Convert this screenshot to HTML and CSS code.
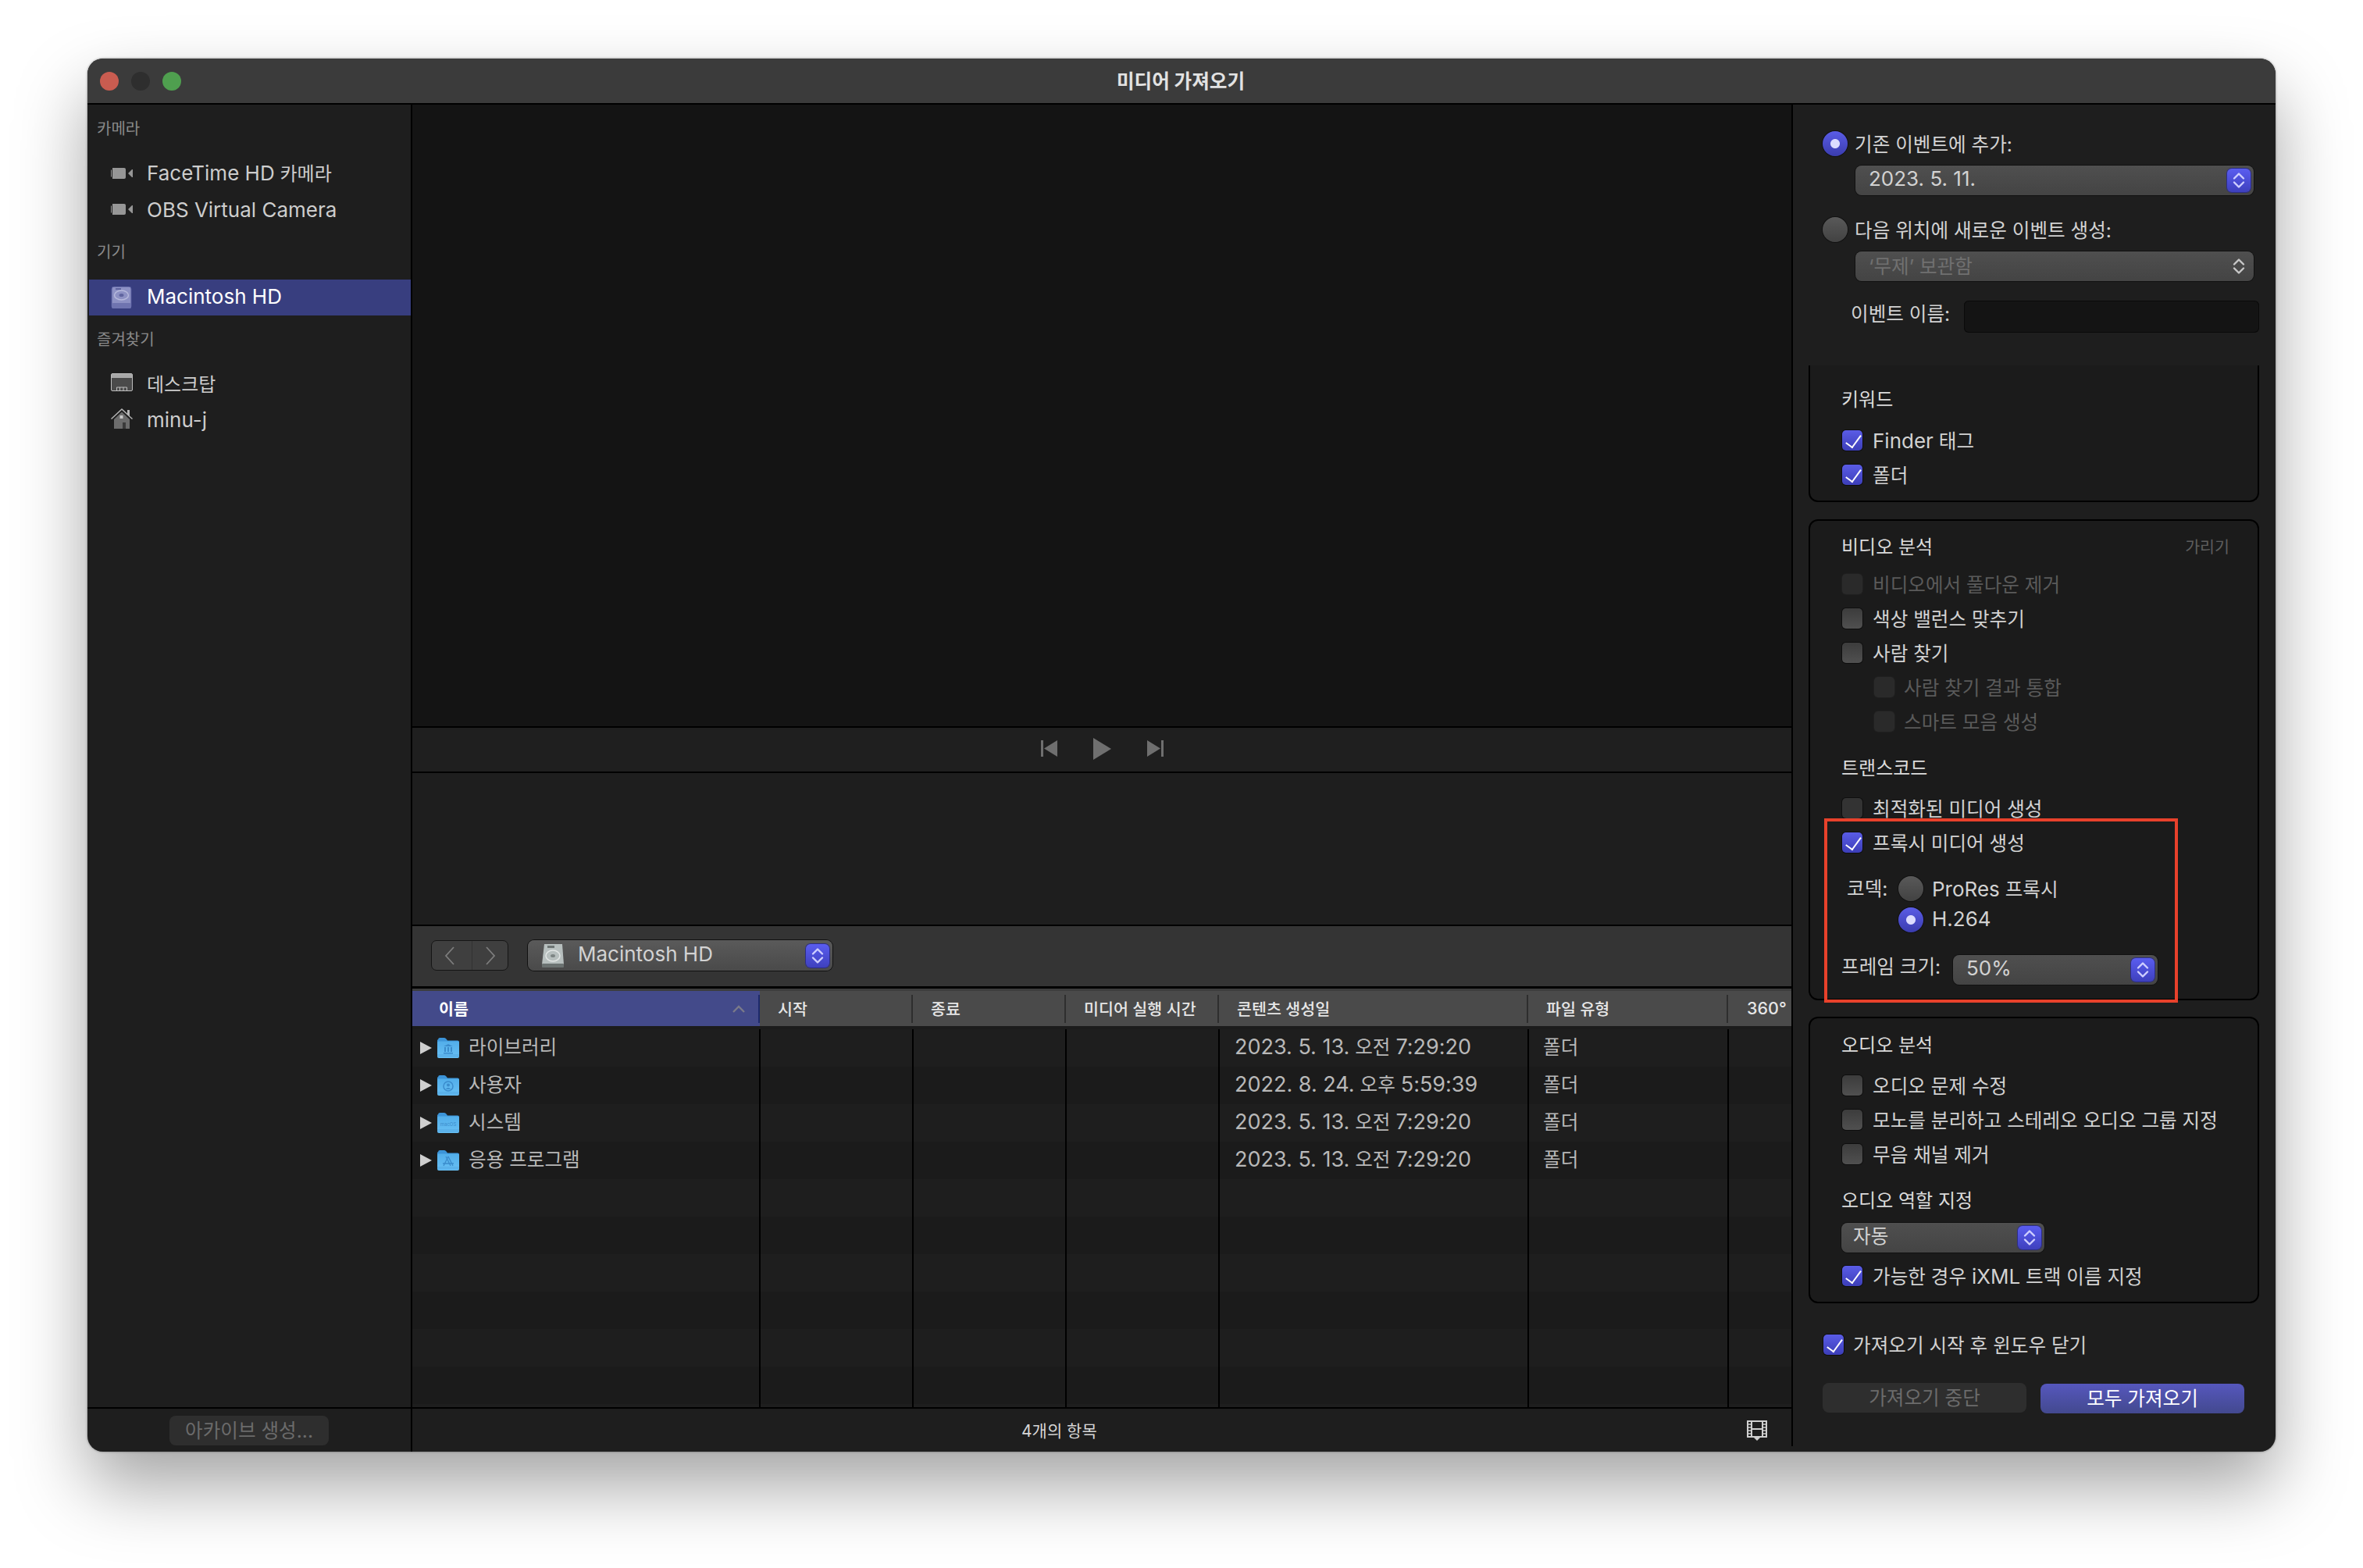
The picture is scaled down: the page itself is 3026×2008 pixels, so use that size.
FILE: index.html
```html
<!doctype html>
<html lang="ko">
<head>
	<title>미디어 가져오기</title>
	<meta charset="utf-8"/>
	<link rel="stylesheet" href="styles.css">
</head>
<body>
	<svg class="defs">
		<defs>
			<linearGradient id="folderBody" x1="0" y1="0" x2="0" y2="1">
				<stop offset="0" stop-color="#52aeea"/>
				<stop offset="1" stop-color="#68c0f4"/>
			</linearGradient>
			<symbol id="chevrons" viewBox="0 0 30 30">
				<path d="M9 12.5 15 6.5l6 6M9 17.5l6 6 6-6" fill="none" stroke-width="2.4" stroke-linecap="round" stroke-linejoin="round"/>
			</symbol>
			<symbol id="folder" viewBox="0 0 28 26">
				<path d="M1 2.5Q1 0 3 0h6q1.500 0 2.500 1.500L13 3.500h13q2 0 2 2V8H0V2.500Z" fill="#3c94d8"/>
				<path d="M0 6q0-1.500 1.500-1.500h25Q28 4.500 28 6v18q0 2-2 2H2q-2 0-2-2Z" fill="url(#folderBody)"/>
				<path d="M0 22h28M0 24h28" stroke="#4a9fdc" stroke-width=".7"/>
			</symbol>
			<symbol id="camera" viewBox="0 0 28 16">
				<path d="M2 1h15q2 0 2 2v10q0 2-2 2H2Z" fill="#969696"/>
				<path d="M0 3.500h1v9H0ZM22 8l5-5h1v10h-1Z" fill="#969696"/>
			</symbol>
		</defs>
	</svg>

	<div class="window">
		<header class="titlebar">
			<div class="lights">
				<span class="light light-red"></span>
				<span class="light light-off"></span>
				<span class="light light-green"></span>
			</div>
			<div class="title">미디어 가져오기</div>
		</header>

		<div class="content">
			<aside class="sidebar">
				<div class="side-list">
					<div class="side-label side-label-first">카메라</div>
					<div class="side-item"><svg class="side-icon"><use href="#camera" x="0" y="6" width="28" height="16"/></svg><span class="side-mixed"><span class="latin">FaceTime HD</span> 카메라</span></div>
					<div class="side-item"><svg class="side-icon"><use href="#camera" x="0" y="6" width="28" height="16"/></svg><span class="latin">OBS Virtual Camera</span></div>
					<div class="side-label side-label-devices">기기</div>
					<div class="side-item side-item-selected">
						<svg class="side-icon" viewBox="0 0 28 28">
							<rect x="1" y="0" width="25" height="28" rx="3" fill="#8d91c4" stroke="#555b9c"/>
							<rect x="6" y="2" width="7" height="2" fill="#5f649f"/>
							<ellipse cx="13.500" cy="11" rx="9" ry="6" fill="none" stroke="#b6b9dc" stroke-width="1.500"/>
							<ellipse cx="13.500" cy="11" rx="3" ry="2" fill="#5f649f"/>
							<rect x="1" y="21" width="25" height="7" rx="2" fill="#6f74b0"/>
						</svg><span class="latin side-mixed">Macintosh HD</span></div>
					<div class="side-label side-label-favorites">즐겨찾기</div>
					<div class="side-item">
						<svg class="side-icon" viewBox="0 0 28 28">
							<rect x="0.500" y="2.500" width="27" height="22" rx="1.500" fill="#4a4a4a" stroke="#bdbdbd"/>
							<rect x="1" y="3" width="26" height="5" fill="#a8a8a8"/>
							<path d="M7.500 24v-4h13v4M11.500 20v4M16 20v4" fill="none" stroke="#bdbdbd"/>
						</svg>데스크탑</div>
					<div class="side-item">
						<svg class="side-icon" viewBox="0 0 28 28">
							<path d="M0 14 14 1l7 6.500V3h3v7.500l4 3.500-1 1L14 3 1 15Z" fill="#b5b5b5"/>
							<path d="M4 15 14 5.500 24 15v12H4Z" fill="#6c6c6c"/>
							<rect x="11.500" y="10" width="4" height="4" fill="#c8c8c8"/>
							<rect x="15" y="19" width="4" height="8" fill="#3a3a3a"/>
						</svg><span class="latin side-user">minu-j</span></div>
				</div>
				<div class="side-foot"><button class="btn btn-off btn-archive">아카이브 생성...</button></div>
			</aside>

			<main class="main">
				<div class="viewer"></div>
				<div class="transport">
					<svg class="tp-icon" viewBox="0 0 21 21"><path d="M0 0h3v21H0ZM21 0v21L4 10.500Z" fill="#6f6f6f"/></svg>
					<svg class="tp-play" viewBox="0 0 23 28"><path d="M0 0v28l23-14Z" fill="#6f6f6f"/></svg>
					<svg class="tp-icon" viewBox="0 0 21 21"><path d="M0 0v21l17-10.500ZM18 0h3v21h-3Z" fill="#6f6f6f"/></svg>
				</div>
				<div class="blank"></div>
				<div class="toolbar">
					<div class="nav">
						<span class="nav-btn nav-back"><svg viewBox="0 0 14 24"><path d="M12 1 2 12l10 11" fill="none" stroke="#7d7d7d" stroke-width="1.800"/></svg></span>
						<span class="nav-btn"><svg viewBox="0 0 14 24"><path d="m2 1 10 11L2 23" fill="none" stroke="#7d7d7d" stroke-width="1.800"/></svg></span>
					</div>
					<div class="select select-path">
						<svg class="hd-icon" viewBox="0 0 30 30">
							<path d="M4 0h23l2 26q0 4-3 4H4q-3 0-3-4Z" fill="#b7bfbe"/>
							<rect x="8" y="2" width="9" height="3" fill="#6d7473"/>
							<ellipse cx="15" cy="15" rx="9" ry="7" fill="none" stroke="#e2e6e5" stroke-width="1.500"/>
							<ellipse cx="15" cy="15" rx="3" ry="2" fill="#7d8584"/>
							<rect x="1" y="25" width="28" height="5" rx="1" fill="#6b7271"/>
						</svg>
						<span class="select-text latin">Macintosh HD</span>
						<span class="stepper"><svg><use href="#chevrons"/></svg></span>
					</div>
				</div>
				<div class="table-head">
					<div class="th th-name">이름<svg class="sort" viewBox="0 0 16 10"><path d="M1 9 8 2l7 7" fill="none" stroke="#7a7a8a" stroke-width="2.400"/></svg></div>
					<div class="th">시작</div>
					<div class="th">종료</div>
					<div class="th">미디어 실행 시간</div>
					<div class="th">콘텐츠 생성일</div>
					<div class="th">파일 유형</div>
					<div class="th th-last">360°</div>
				</div>
				<div class="table-body">
					<div class="row">
						<div class="cell-name"><span class="arrow"></span><svg class="folder"><use href="#folder"/><path d="M8 11 14 8l6 3ZM9 12h2v6H9ZM13 12h2v6h-2ZM17 12h2v6h-2ZM8 19h12v1.500H8Z" fill="#3b8ccc"/></svg>라이브러리</div>
						<div class="cell-date"><span class="num">2023. 5. 13.</span> 오전 <span class="num">7:29:20</span></div>
						<div class="cell-type">폴더</div>
					</div>
					<div class="row">
						<div class="cell-name"><span class="arrow"></span><svg class="folder"><use href="#folder"/><circle cx="14" cy="14" r="6" fill="none" stroke="#3b8ccc" stroke-width="1.500"/><circle cx="14" cy="12.500" r="2" fill="#3b8ccc"/><path d="M10.500 18q3.500-4 7 0Z" fill="#3b8ccc"/></svg>사용자</div>
						<div class="cell-date"><span class="num">2022. 8. 24.</span> 오후 <span class="num">5:59:39</span></div>
						<div class="cell-type">폴더</div>
					</div>
					<div class="row">
						<div class="cell-name"><span class="arrow"></span><svg class="folder"><use href="#folder"/><text class="folder-text" x="14" y="17" text-anchor="middle">macOS</text></svg>시스템</div>
						<div class="cell-date"><span class="num">2023. 5. 13.</span> 오전 <span class="num">7:29:20</span></div>
						<div class="cell-type">폴더</div>
					</div>
					<div class="row">
						<div class="cell-name"><span class="arrow"></span><svg class="folder"><use href="#folder"/><path d="M14 8 8 20M14 8l6 12M7 17h14M11 8l6 12" fill="none" stroke="#3b8ccc" stroke-width="1.300"/></svg>응용 프로그램</div>
						<div class="cell-date"><span class="num">2023. 5. 13.</span> 오전 <span class="num">7:29:20</span></div>
						<div class="cell-type">폴더</div>
					</div>
					<div class="row"></div>
					<div class="row"></div>
					<div class="row"></div>
					<div class="row"></div>
					<div class="row"></div>
					<div class="row"></div>
					<div class="row"></div>
				</div>
				<div class="status">
					<span class="status-count">4개의 항목</span>
					<svg class="film" viewBox="0 0 26 26">
						<path d="M1 1h24v20H1Z" fill="none" stroke="#cfcfcf" stroke-width="2"/>
						<path d="M6 1v20M20 1v20M6 11h14" fill="none" stroke="#cfcfcf" stroke-width="2"/>
						<path d="M2 5h3M2 9h3M2 13h3M2 17h3M21 5h3M21 9h3M21 13h3M21 17h3" stroke="#cfcfcf" stroke-width="1.500"/>
						<path d="m9 22 4 4 4-4Z" fill="#cfcfcf"/>
					</svg>
				</div>
			</main>

			<section class="panel">
				<div class="top-form">
					<label class="radio-row"><span class="radio radio-on"></span>기존 이벤트에 추가:</label>
					<div class="select select-event"><span class="select-text latin">2023. 5. 11.</span><span class="stepper"><svg><use href="#chevrons"/></svg></span></div>
					<label class="radio-row radio-row-second"><span class="radio"></span>다음 위치에 새로운 이벤트 생성:</label>
					<div class="select select-event select-off"><span class="select-text">‘무제’ 보관함</span><span class="stepper"><svg><use href="#chevrons"/></svg></span></div>
					<div class="name-row"><span class="name-label">이벤트 이름:</span><span class="name-input"></span></div>
				</div>

				<div class="box box-keywords">
					<div class="heading">키워드</div>
					<label class="check-row"><span class="check check-on"></span><span><span class="latin">Finder</span> 태그</span></label>
					<label class="check-row"><span class="check check-on"></span>폴더</label>
				</div>

				<div class="box box-video">
					<div class="heading heading-split">비디오 분석<span class="hide-link">가리기</span></div>
					<label class="check-row check-row-off"><span class="check check-off"></span>비디오에서 풀다운 제거</label>
					<label class="check-row"><span class="check"></span>색상 밸런스 맞추기</label>
					<label class="check-row"><span class="check"></span>사람 찾기</label>
					<label class="check-row check-row-off check-row-sub"><span class="check check-off"></span>사람 찾기 결과 통합</label>
					<label class="check-row check-row-off check-row-sub"><span class="check check-off"></span>스마트 모음 생성</label>
					<div class="heading heading-gap">트랜스코드</div>
					<label class="check-row check-row-transcode"><span class="check check-dim"></span>최적화된 미디어 생성</label>
					<label class="check-row"><span class="check check-on"></span>프록시 미디어 생성</label>
					<div class="codec">
						<span class="codec-label">코덱:</span>
						<div class="codec-options">
							<label class="radio-row"><span class="radio"></span><span><span class="latin">ProRes</span> 프록시</span></label>
							<label class="radio-row"><span class="radio radio-on"></span><span class="latin">H.264</span></label>
						</div>
					</div>
					<div class="frame-row">
						<span class="frame-label">프레임 크기:</span>
						<div class="select select-frame"><span class="select-text latin">50%</span><span class="stepper"><svg><use href="#chevrons"/></svg></span></div>
					</div>
					<div class="red-mark"></div>
				</div>

				<div class="box box-audio">
					<div class="heading">오디오 분석</div>
					<label class="check-row"><span class="check"></span>오디오 문제 수정</label>
					<label class="check-row"><span class="check"></span>모노를 분리하고 스테레오 오디오 그룹 지정</label>
					<label class="check-row"><span class="check"></span>무음 채널 제거</label>
					<div class="heading heading-gap">오디오 역할 지정</div>
					<div class="select select-role"><span class="select-text">자동</span><span class="stepper"><svg><use href="#chevrons"/></svg></span></div>
					<label class="check-row check-row-ixml"><span class="check check-on"></span><span>가능한 경우 <span class="latin">iXML</span> 트랙 이름 지정</span></label>
				</div>

				<label class="check-row close-row"><span class="check check-on"></span>가져오기 시작 후 윈도우 닫기</label>
				<div class="actions">
					<button class="btn btn-off btn-action">가져오기 중단</button>
					<button class="btn btn-primary btn-action">모두 가져오기</button>
				</div>
			</section>
		</div>
	</div>
</body>
</html>
```

FILE: styles.css
```css
* {
	box-sizing: border-box;
}
html, body {
	height: 100%;
}
body {
	margin: 0;
	padding: 75px 112px 0;
	background-color: #fff;
	overflow: hidden;
	font-family: Inter, "Noto Sans CJK KR", sans-serif;
	font-size: 24.6px;
	color: #d2d2d2;
}
.defs {
	display: block;
	width: 0;
	height: 0;
}
.latin {
	font-size: 26px;
}
.num {
	font-size: 27px;
}

.window {
	width: 2802px;
	height: 1784px;
	display: flex;
	flex-direction: column;
	border-radius: 20px;
	background-color: #1e1e1e;
	box-shadow: 0 44px 90px rgba(0, 0, 0, 0.36), 0 0 3px rgba(0, 0, 0, 0.45);
	overflow: hidden;
}

/* title bar */
.titlebar {
	flex: none;
	height: 59px;
	display: flex;
	align-items: center;
	background-color: #3b3b3b;
	border-bottom: 2px solid #000;
}
.lights {
	width: 0;
	display: flex;
	gap: 16px;
	margin-left: 16px;
}
.light {
	flex: none;
	width: 24px;
	height: 24px;
	border-radius: 50%;
}
.light-red {
	background-color: #c95c50;
}
.light-off {
	background-color: #2e2e2e;
}
.light-green {
	background-color: #4f9f4f;
}
.title {
	flex: 1;
	margin: -4px 0 0 -18px;
	text-align: center;
	font-size: 24.6px;
	font-weight: 700;
	color: #e2e2e2;
}

.content {
	flex: 1;
	min-height: 0;
	display: flex;
}

/* sidebar */
.sidebar {
	flex: none;
	width: 416px;
	display: flex;
	flex-direction: column;
	border-right: 2px solid #000;
}
.side-list {
	flex: 1;
}
.side-label {
	height: 30px;
	line-height: 30px;
	padding-left: 12px;
	font-size: 20px;
	color: #8a8a8a;
}
.side-label-first {
	margin-top: 16px;
	margin-bottom: 19px;
}
.side-label-devices {
	margin-top: 17px;
	margin-bottom: 20px;
}
.side-label-favorites {
	margin-top: 16px;
	margin-bottom: 17px;
}
.side-item {
	height: 46px;
	margin-left: 2px;
	display: flex;
	align-items: center;
	gap: 18px;
	padding-left: 28px;
	font-size: 24px;
	color: #cdcdcd;
}
.side-item-selected {
	background-color: #383e7f;
	color: #fff;
}
.side-mixed {
	margin-top: -4px;
}
.side-user {
	margin-top: 3px;
}
.side-icon {
	flex: none;
	width: 28px;
	height: 28px;
}
.side-foot {
	flex: none;
	height: 57px;
	display: flex;
	justify-content: center;
	padding-top: 9px;
	border-top: 2px solid #000;
}

/* buttons */
.btn {
	height: 38px;
	padding: 0;
	border: 0;
	border-radius: 8px;
	font-family: inherit;
	font-size: 24.6px;
	line-height: 36px;
}
.btn-off {
	background-color: #2e2e2e;
	color: #6b6b6b;
}
.btn-primary {
	margin-top: 1px;
	background: linear-gradient(#5657bd, #43498f);
	color: #fff;
}
.btn-archive {
	width: 204px;
}
.btn-action {
	width: 261px;
}

/* center column */
.main {
	flex: none;
	width: 1766px;
	display: flex;
	flex-direction: column;
}
.viewer {
	flex: none;
	height: 798px;
	background-color: #141414;
	border-bottom: 2px solid #000;
}
.transport {
	flex: none;
	height: 58px;
	display: flex;
	align-items: center;
	gap: 46px;
	padding: 0 0 3px 805px;
	background-color: #1f1f1f;
	border-bottom: 2px solid #000;
}
.tp-icon {
	width: 21px;
	height: 21px;
}
.tp-play {
	width: 23px;
	height: 28px;
}
.blank {
	flex: none;
	height: 196px;
	background-color: #1e1e1e;
	border-bottom: 2px solid #000;
}
.toolbar {
	flex: none;
	height: 80px;
	display: flex;
	align-items: flex-start;
	gap: 25px;
	padding: 18px 0 0 24px;
	background-color: #343434;
	border-bottom: 3px solid #000;
}
.nav {
	width: 99px;
	height: 39px;
	display: flex;
	background-color: #3f3f3f;
	border: 1px solid #151515;
	border-radius: 7px;
}
.nav-btn {
	flex: 1;
	display: flex;
	align-items: center;
	justify-content: center;
}
.nav-back {
	padding-right: 6px;
}
.nav-btn + .nav-btn {
	border-left: 1px solid #333;
}
.nav-btn svg {
	width: 14px;
	height: 24px;
}

/* table */
.table-head {
	flex: none;
	height: 48px;
	display: grid;
	grid-template-columns: 445px 196px 196px 196px 396px 256px 81px;
	border-top: 3px solid #3d3d3d;
	background-color: #4a4a4a;
	font-size: 20.6px;
	font-weight: 500;
	color: #e6e6e6;
}
.th {
	display: flex;
	align-items: center;
	padding: 0 0 2px 23px;
	background: linear-gradient(#2e2e2e, #2e2e2e) right center / 2px 36px no-repeat;
}
.th-name {
	justify-content: space-between;
	padding: 0 19px 2px 34px;
	background: #434a8a linear-gradient(#1d2a6c, #1d2a6c) right center / 2px 36px no-repeat;
	font-weight: 700;
	color: #fff;
}
.th-last {
	padding-left: 24px;
	font-size: 21.5px;
	background: none;
}
.sort {
	width: 16px;
	height: 10px;
	margin-top: 2px;
}
.table-body {
	flex: 1;
	min-height: 0;
	padding-top: 4px;
	overflow: hidden;
	background-color: #1b1b1b;
}
.row {
	height: 48px;
	display: grid;
	grid-template-columns: 445px 588px 396px 256px 81px;
	align-items: center;
	color: #b8b8b8;
	background:
		linear-gradient(#000, #000) 444px 0 / 2px 100% no-repeat,
		linear-gradient(#000, #000) 640px 0 / 2px 100% no-repeat,
		linear-gradient(#000, #000) 836px 0 / 2px 100% no-repeat,
		linear-gradient(#000, #000) 1032px 0 / 2px 100% no-repeat,
		linear-gradient(#000, #000) 1428px 0 / 2px 100% no-repeat,
		linear-gradient(#000, #000) 1684px 0 / 2px 100% no-repeat,
		#1e1e1e;
}
.row:nth-child(even) {
	background-color: #1b1b1b;
}
.cell-name {
	display: flex;
	align-items: center;
	padding: 0 0 6px 10px;
}
.cell-date {
	grid-column: 3;
	padding-left: 20px;
	margin-top: -6px;
}
.cell-type {
	padding-left: 19px;
	margin-top: -6px;
}
.arrow {
	flex: none;
	width: 0;
	height: 0;
	margin: 6px 7px 0 0;
	border-style: solid;
	border-width: 8px 0 8px 15px;
	border-color: transparent transparent transparent #cfcfcf;
}
.folder {
	flex: none;
	width: 28px;
	height: 26px;
	margin: 6px 12px 0 0;
}
.folder-text {
	font-size: 6px;
	font-family: Inter, sans-serif;
	fill: #3b8ccc;
}
.status {
	flex: none;
	height: 57px;
	display: flex;
	align-items: center;
	padding: 0 31px 0 780px;
	border-top: 2px solid #000;
	font-size: 21px;
	color: #d6d6d6;
}
.status-count {
	flex: 1;
	margin-top: -2px;
}
.film {
	width: 26px;
	height: 26px;
}

/* right panel */
.panel {
	flex: 1;
	min-width: 0;
	padding-left: 2px;
	background: linear-gradient(#000, #000) left top / 2px calc(100% - 7px) no-repeat;
}
.top-form {
	height: 334px;
	padding: 34px 0 0 38px;
}
.radio-row {
	display: flex;
	align-items: center;
	gap: 9px;
	height: 32px;
	padding-bottom: 3px;
	color: #d2d2d2;
}
.radio-row-second {
	margin-top: 28px;
}
.radio {
	flex: none;
	width: 32px;
	height: 32px;
	margin-top: 3px;
	border-radius: 50%;
	background: linear-gradient(#595959, #424242);
	box-shadow: 0 0 0 1px #111;
}
.radio-on {
	background: radial-gradient(circle, #dcdcff 0, #dcdcff 5.500px, transparent 6.500px), linear-gradient(#5a5ce6, #3a3cae);
}

/* pop-up buttons */
.select {
	position: relative;
	height: 38px;
	display: flex;
	align-items: center;
	justify-content: space-between;
	padding: 0 4px 0 17px;
	border-radius: 8px;
	background: linear-gradient(#4f4f4f, #444);
	box-shadow: 0 0 0 1px #111;
}
.select-text {
	margin-top: -5px;
}
.select-event {
	width: 510px;
	margin: 12px 0 0 42px;
}
.select-off .select-text {
	color: #707070;
}
.select-off .stepper {
	background: none;
	box-shadow: none;
}
.select-off .stepper svg {
	stroke: #c8c8c8;
}
.select-path {
	width: 390px;
	height: 39px;
	padding: 0 4px 0 17px;
	background: linear-gradient(#5a5a5a, #4a4a4a);
}
.select-path .select-text {
	flex: 1;
	margin-left: 17px;
}
.hd-icon {
	flex: none;
	width: 30px;
	height: 30px;
}
.select-frame {
	flex: none;
	width: 262px;
}
.select-role {
	width: 260px;
	margin-top: 14px;
	padding-left: 15px;
}
.select-role .select-text {
	margin-top: -9px;
}
.stepper {
	flex: none;
	width: 30px;
	height: 30px;
	border-radius: 6px;
	background: linear-gradient(#5a5df0, #3e40bd);
	box-shadow: 0 0 0 1px #2c2d85;
}
.stepper svg {
	display: block;
	width: 30px;
	height: 30px;
	stroke: #cfcfff;
}
.name-row {
	display: flex;
	align-items: center;
	margin: 25px 0 0 36px;
	height: 41px;
}
.name-label {
	width: 145px;
	margin-top: -12px;
}
.name-input {
	width: 378px;
	height: 41px;
	border-radius: 6px;
	background-color: #141414;
	box-shadow: inset 0 0 0 1px #0a0a0a;
}

/* option boxes */
.box {
	position: relative;
	width: 577px;
	margin-left: 20px;
	padding: 0 36px 0 40px;
	background-color: #1b1b1b;
	border: 2px solid #000;
	border-radius: 12px;
}
.box-keywords {
	height: 175px;
	padding-top: 28px;
	border-top: 0;
	border-radius: 0 0 12px 12px;
}
.box-keywords .heading {
	margin-bottom: 16px;
}
.box-video {
	height: 616px;
	margin-top: 22px;
	padding-top: 18px;
}
.box-audio {
	height: 367px;
	margin-top: 21px;
	padding-top: 19px;
}
.heading {
	height: 30px;
	padding-top: 1px;
	line-height: 30px;
	font-size: 24px;
	color: #dcdcdc;
	margin-bottom: 11px;
}
.box-audio > .heading:first-child {
	margin-bottom: 15px;
}
.heading-split {
	display: flex;
	justify-content: space-between;
}
.heading-gap {
	margin-top: 22px;
	margin-bottom: 15px;
}
.box-audio .heading-gap {
	margin-bottom: 0;
}
.hide-link {
	font-size: 20.6px;
	color: #5e5e5e;
}
.check-row {
	height: 44px;
	display: flex;
	align-items: center;
	gap: 13px;
	padding-bottom: 3px;
	color: #d2d2d2;
}
.check-row-off {
	color: #5a5a5a;
}
.check-row-sub {
	padding-left: 41px;
	gap: 12px;
}
.check-row-ixml {
	margin-top: 8px;
}
.check {
	flex: none;
	width: 26px;
	height: 26px;
	margin: 3px 0 0 1px;
	border-radius: 5px;
	background: linear-gradient(#3c3c3c, #505050);
	box-shadow: 0 0 0 1px #0e0e0e;
}
.check-off {
	background: #2a2a2a;
	box-shadow: 0 0 0 1px #202020;
}
.check-dim {
	background: #333;
}
.check-on {
	background: linear-gradient(#5a5ce6, #3c3eb8);
	position: relative;
}
.check-on::after {
	content: "";
	position: absolute;
	left: 9px;
	top: 2px;
	width: 9px;
	height: 18px;
	border: solid #fff;
	border-width: 0 2.500px 2.500px 0;
	transform: rotate(36deg);
}
.codec {
	display: flex;
	margin-top: 21px;
}
.codec-label {
	width: 73px;
	padding-left: 7px;
	line-height: 32px;
}
.codec-options {
	display: flex;
	flex-direction: column;
	gap: 8px;
}
.codec-options .radio-row {
	gap: 11px;
}
.frame-row {
	display: flex;
	align-items: center;
	margin-top: 29px;
	gap: 0;
}
.frame-label {
	width: 143px;
	margin-top: -12px;
}
.red-mark {
	position: absolute;
	left: 18px;
	top: 381px;
	width: 453px;
	height: 236px;
	border: 4px solid #e8412b;
}
.close-row {
	margin: 31px 0 0 38px;
	gap: 12px;
}
.actions {
	display: flex;
	align-items: flex-start;
	gap: 18px;
	margin: 27px 0 0 38px;
}
```
